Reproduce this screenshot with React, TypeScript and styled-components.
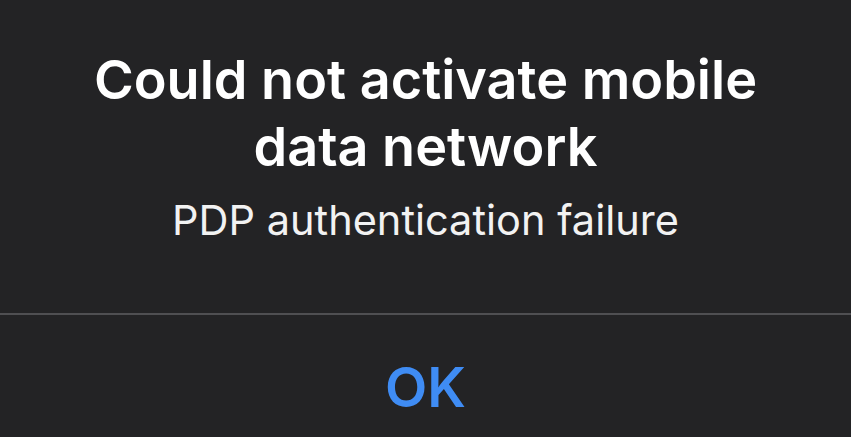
import React from 'react';
import styled, { createGlobalStyle } from 'styled-components';

const GlobalStyle = createGlobalStyle`
  html, body {
    margin: 0;
    padding: 0;
    background: #232325;
  }
`;

const Alert = styled.div`
  width: 851px;
  height: 437px;
  display: flex;
  flex-direction: column;
  background: #232325;
  font-family: Inter, 'Liberation Sans', sans-serif;
  overflow: hidden;
`;

const Body = styled.div`
  height: 313px;
  box-sizing: border-box;
  padding-top: 46px;
  display: flex;
  flex-direction: column;
  align-items: center;
  text-align: center;
`;

const Title = styled.div`
  color: #ffffff;
  font-size: 54px;
  font-weight: 600;
  line-height: 67px;
`;

const Message = styled.div`
  margin-top: 12px;
  color: #f2f2f2;
  font-size: 41.5px;
  font-weight: 400;
  line-height: 56px;
`;

const Divider = styled.div`
  height: 2px;
  background: #4f4f52;
`;

const Action = styled.button`
  flex: 1;
  border: 0;
  background: transparent;
  color: #3f8cf4;
  font-family: inherit;
  font-size: 55px;
  font-weight: 600;
  padding: 22px 0 0;
  cursor: pointer;
`;

const App: React.FC = () => (
  <>
    <GlobalStyle />
    <Alert>
      <Body>
        <Title>
          Could not activate mobile
          <br />
          data network
        </Title>
        <Message>PDP authentication failure</Message>
      </Body>
      <Divider />
      <Action>OK</Action>
    </Alert>
  </>
);

export default App;
